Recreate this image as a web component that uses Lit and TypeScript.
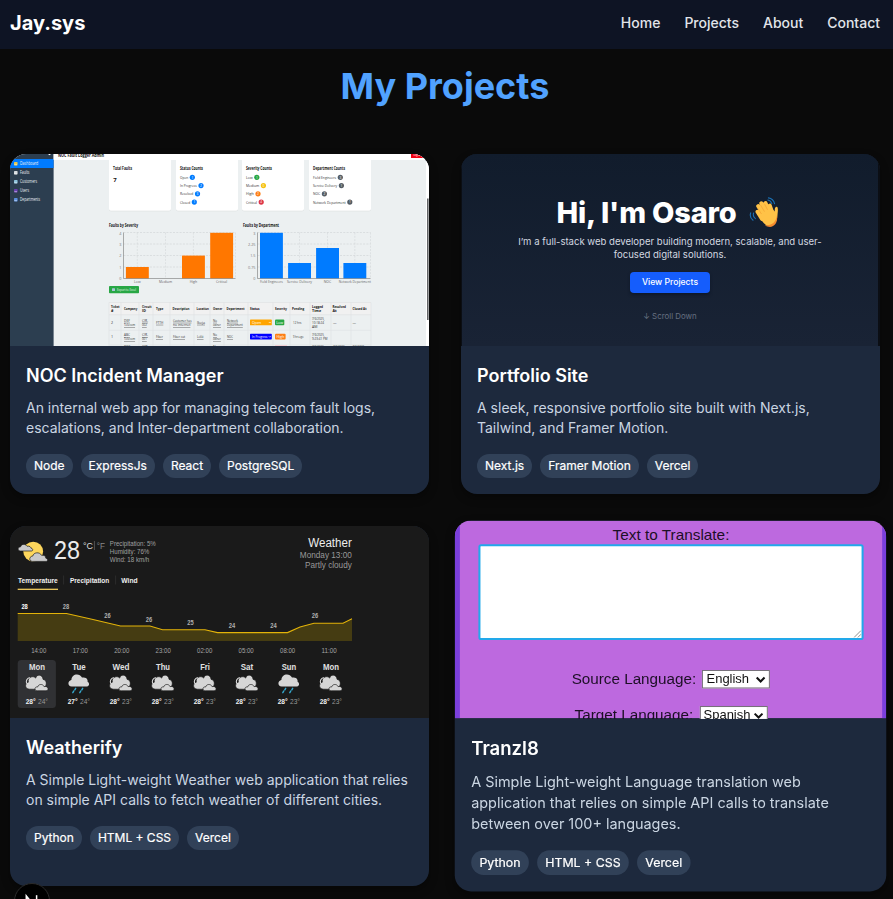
import { LitElement, html, svg, css } from "lit";
import { customElement } from "lit/decorators.js";

type TextOpts = { size?: number; fill?: string; bold?: boolean; anchor?: string; width?: number; underline?: boolean };

/* Small SVG label centred vertically on y; a width stretches or squeezes it to fit. */
const put = (x: number, y: number, text: string, o: TextOpts = {}) => {
  const size = o.size ?? 4.4;
  const fill = o.fill ?? "#333";
  const weight = o.bold ? 700 : 400;
  const anchor = o.anchor ?? "start";
  const line = o.underline ? "underline" : "none";
  return o.width
    ? svg`<text x=${x} y=${y + size * 0.36} font-size=${size} fill=${fill} font-weight=${weight} text-anchor=${anchor} text-decoration=${line} textLength=${o.width} lengthAdjust="spacingAndGlyphs">${text}</text>`
    : svg`<text x=${x} y=${y + size * 0.36} font-size=${size} fill=${fill} font-weight=${weight} text-anchor=${anchor} text-decoration=${line}>${text}</text>`;
};

@customElement("noc-preview")
class NocPreview extends LitElement {
  static styles = css`
    :host { display: block; height: 192px; }
    svg { display: block; width: 100%; height: 100%; font-family: "Open Sans", "Noto Sans", sans-serif; }
  `;

  private nav = [
    ["Dashboard", 163.7, 18.3, "#e8c84c"], ["Faults", 172.8, 9.5, "#d8dde2"], ["Customers", 181.8, 17, "#8fc4dd"],
    ["Users", 190.7, 9, "#6a3fb0"], ["Departments", 199.7, 20, "#5b8fe0"],
  ] as [string, number, number, string][];

  private counts = [
    { x: 176, title: "Status Counts", w: 23, rows: [["Open", 192.3, "#007bff", "1"], ["In Progress", 201, "#007bff", "2"], ["Resolved", 197.5, "#007bff", "3"], ["Closed", 194.3, "#007bff", "1"]] },
    { x: 242, title: "Severity Counts", w: 26, rows: [["Low", 256.8, "#28a745", "1"], ["Medium", 263.4, "#f5c211", "0"], ["High", 258, "#fd7e14", "2"], ["Critical", 261.2, "#dc3545", "4"]] },
    { x: 309, title: "Department Counts", w: 32, rows: [["Field Engineers", 340.3, "#555d65", "3"], ["Service Delivery", 341.4, "#555d65", "1"], ["NOC", 324.4, "#555d65", "2"], ["Network Department", 349.8, "#555d65", "1"]] },
  ] as { x: number; title: string; w: number; rows: [string, number, string, string][] }[];

  private chart(x0: number, x1: number, ticks: string[], bars: [string, number, number, number][], color: string) {
    return svg`
      ${[232.5, 244, 255.5, 267].map((y) => svg`<line x1=${x0} x2=${x1} y1=${y} y2=${y} stroke="#c9cdce" stroke-width=".5" stroke-dasharray="2 1.3"/>`)}
      ${[...bars.map((b) => b[1]), x1].map((x) => svg`<line x1=${x} x2=${x} y1="232.5" y2="278.5" stroke="#cfd3d4" stroke-width=".5" stroke-dasharray="2 1.3"/>`)}
      ${bars.map(([, x, top]) => (top ? svg`<rect x=${x - 11.4} y=${top} width="22.9" height=${278.5 - top} fill=${color}/>` : ""))}
      <path d="M${x0} 232.5V278.5H${x1}" fill="none" stroke="#777" stroke-width=".6"/>
      ${ticks.map((t, i) => put(x0 - 2, 233.2 + i * 11.4, t, { size: 3.8, fill: "#777", anchor: "end" }))}
      ${bars.map(([t, x, , w]) => put(x, 281.6, t, { size: 4.1, fill: "#666", anchor: "middle", width: w }))}
    `;
  }

  render() {
    const cols = [109, 121, 139, 153, 170, 194, 210, 224, 248, 273, 290, 310, 331, 351, 371];
    const heads: [number, string, number, string?][] = [
      [111, "Ticket", 8.5, "#"], [124, "Company", 13.3], [142, "Circuit", 9.5, "ID"], [156, "Type", 7.3], [172.5, "Description", 17], [196.5, "Location", 12.5],
      [213, "Owner", 9.3], [226.5, "Department", 18], [250, "Status", 9.5], [275, "Severity", 12], [292, "Pending", 12.3], [312, "Logged", 11, "Time"], [332.5, "Resolved", 13.3, "At"], [352.5, "Closed At", 14],
    ];
    const rows: [number, string, [number, string, number, string?][]][] = [
      [322.5, "2", [[124, "DEF", 6, "Telecom"], [142, "CIR-", 6, "002"], [156, "FTTH", 7.3], [173, "Customer has", 18.5, "no internet"], [197, "Ikeja", 8], [213, "No", 4, "owner"], [227, "Network", 11, "Department"]]],
      [336.8, "1", [[124, "ABC", 6, "Telecom"], [142, "CIR-", 6, "001"], [156, "Fiber", 7], [173, "Fiber cut", 12], [197, "Lekki", 6.5], [213, "No", 4, "owner"], [227, "NOC", 6]]],
    ];
    return html`<svg viewBox="10 154 419 192">
      <rect x="10" y="154" width="419" height="192" fill="#ecf0f1"/>
      <rect x="10" y="154" width="43.6" height="192" fill="#2c3e50"/>
      <rect x="10" y="159" width="43.6" height="9" fill="#007bff"/>
      <path d="M48 154l1.5 1.2L51 154z" fill="#fff"/>
      ${this.nav.map(([t, y, w, c]) => svg`
        <rect x="14" y=${y - 1.7} width="3.6" height="3.4" rx=".7" fill=${c}/>
        <path d="M14.4 ${y + 1}h2.6" stroke="#fff" stroke-width=".5"/>
        ${put(20, y, t, { size: 4.5, fill: "#eef2f5", width: w })}`)}
      <rect x="53.6" y="154" width="376" height="6" fill="#fff"/>
      ${put(58, 155, "NOC Fault Logger Admin", { size: 5.4, fill: "#111", bold: true, width: 46 })}
      <rect x="411" y="154" width="13" height="4" fill="#f00012"/>
      ${put(413.5, 154.4, "Logout", { size: 3.6, fill: "#fff", width: 8 })}
      <rect x="426" y="154" width="3" height="192" fill="#fff"/>
      <rect x="427" y="198.5" width="1.6" height="121.5" fill="#626466"/>

      ${[109, 176, 242, 309].map((x) => svg`<path d="M${x} 160h62v49.5q0 1.7-1.7 1.7h-58.6q-1.7 0-1.7-1.7z" fill="#d5dadb"/>
        <path d="M${x} 159h62v50q0 1.7-1.7 1.7h-58.6q-1.7 0-1.7-1.7z" fill="#fff"/>`)}
      ${put(113, 168, "Total Faults", { size: 4.3, fill: "#111", bold: true, width: 19 })}
      ${put(113.2, 179.5, "7", { size: 6, fill: "#111", bold: true })}
      ${this.counts.map((c) => svg`
        ${put(c.x + 4, 168, c.title, { size: 4.3, fill: "#111", bold: true, width: c.w })}
        ${c.rows.map(([t, cx, color, n], i) => svg`
          ${put(c.x + 4, 177.4 + i * 8.25, t, { size: 4.3, width: cx - c.x - 8.2 })}
          <circle cx=${cx} cy=${177.3 + i * 8.25} r="2.6" fill=${color}/>
          ${put(cx, 177.4 + i * 8.25, n, { size: 3.2, fill: "#fff", anchor: "middle" })}`)}`)}

      ${put(109, 225, "Faults by Severity", { size: 4.4, fill: "#111", bold: true, width: 29 })}
      ${put(243, 225, "Faults by Department", { size: 4.4, fill: "#111", bold: true, width: 36 })}
      ${this.chart(123.5, 235.5, ["4", "3", "2", "1", "0"], [["Low", 137.3, 267, 6.5], ["Medium", 165.5, 0, 13], ["High", 193.4, 255.6, 7.5], ["Critical", 221.6, 232.8, 11]], "#ff7700")}
      ${this.chart(257.5, 370.5, ["3", "2.25", "1.5", "0.75", "0"], [["Field Engineers", 271.4, 232.8, 23], ["Service Delivery", 299.5, 263, 25], ["NOC", 327.5, 248, 7.5], ["Network Department", 354.8, 263, 32]], "#007bff")}

      <rect x="109" y="286" width="30" height="7.3" rx=".8" fill="#28a745"/>
      <rect x="112" y="288.3" width="3" height="2.8" rx=".5" fill="#a9c4d8"/>
      ${put(117, 289.8, "Export to Excel", { size: 4, fill: "#e9f8ec", width: 19 })}

      <rect x="109" y="302.5" width="262" height="12.2" fill="#f1f1f1"/>
      ${[302.5, 314.7, 330.3, 345].map((y) => svg`<line x1="109" x2="371" y1=${y} y2=${y} stroke="#dde1e2" stroke-width=".6"/>`)}
      ${cols.map((x) => svg`<line x1=${x} x2=${x} y1="302.5" y2="346" stroke="#dde1e2" stroke-width=".6"/>`)}
      ${heads.map(([x, a, w, b]) => b
        ? svg`${put(x, 306.5, a, { size: 3.7, fill: "#111", bold: true, width: w })}${put(x, 310.7, b, { size: 3.7, fill: "#111", bold: true })}`
        : put(x, 308.6, a, { size: 3.7, fill: "#111", bold: true, width: w }))}
      ${rows.map(([y, id, cells]) => svg`
        ${put(111, y, id, { size: 3.6 })}
        ${cells.map(([x, a, w, b]) => b
          ? svg`${put(x, y - 2, a, { size: 3.7, underline: true, width: w })}${put(x, y + 2.3, b, { size: 3.7, underline: true, width: b.length * 1.58 })}`
          : put(x, y, a, { size: 3.7, underline: true, width: w }))}`)}
      <rect x="250" y="319.6" width="21.8" height="5.7" rx=".6" fill="#ffa500"/>
      ${put(252, 322.5, "Open", { size: 3.6, fill: "#fff" })}
      <rect x="250" y="333.8" width="21.8" height="5.6" rx=".6" fill="#0000ff"/>
      ${put(252, 336.7, "In Progress", { size: 3.6, fill: "#fff", width: 15.5 })}
      <path d="M268.8 322l1 1 1-1M268.8 336.2l1 1 1-1" stroke="#fff" fill="none" stroke-width=".6"/>
      <rect x="275" y="319.6" width="9.3" height="5.7" rx="1" fill="#28a745"/>
      ${put(279.6, 322.5, "Low", { size: 3.6, fill: "#fff", anchor: "middle" })}
      <rect x="275" y="333.8" width="10.6" height="5.8" rx="1" fill="#fd7e14"/>
      ${put(280.3, 336.7, "High", { size: 3.6, fill: "#fff", anchor: "middle" })}
      ${put(293, 322.5, "12 hrs", { size: 3.6, width: 8.5 })}${put(293, 336.7, "9 hrs ago", { size: 3.5, width: 10.5 })}
      ${put(312, 318.5, "7/6/2025,", { size: 3.5, width: 12.5 })}${put(312, 322.7, "10:18:24", { size: 3.5, width: 12 })}${put(312, 327, "AM", { size: 3.5 })}
      ${put(312, 334.7, "7/6/2025,", { size: 3.5, width: 12.5 })}${put(312, 339, "9:23:41 PM", { size: 3.5, width: 15.5 })}
      ${put(333, 322.5, "—", { size: 3.6 })}${put(352.5, 322.5, "—", { size: 3.6 })}
      ${put(124, 346.3, "DEF", { size: 3.6 })}${put(142, 346.3, "CIR-", { size: 3.6 })}${put(213, 346.3, "No", { size: 3.6 })}
      <rect x="275" y="345.2" width="12" height="1" fill="#f6c9cd"/>
      ${[312, 333, 352.5].map((x) => put(x, 346.3, "7/6/2025,", { size: 3.5, width: 12.5 }))}
    </svg>`;
  }
}

@customElement("portfolio-preview")
class PortfolioPreview extends LitElement {
  static styles = css`
    :host { display: block; height: 192px; padding: 0 2px 0 1px; background: #0b0e14; box-sizing: border-box; }
    .hero { height: 192px; box-sizing: border-box; padding-top: 40px; display: flex; flex-direction: column; align-items: center; background: linear-gradient(#111c2c, #192335); }
    .title { display: flex; align-items: center; gap: 11px; margin-right: 5px; height: 37px; color: #fff; font-weight: 800; font-size: 29px; line-height: 37px; letter-spacing: -0.18px; white-space: nowrap; }
    .hand { width: 31px; height: 31px; display: block; }
    .lead { margin-top: 3.5px; text-align: center; font-size: 9.55px; line-height: 13.3px; color: #d3d8e0; white-space: nowrap; }
    .button { margin-top: 11px; width: 80px; height: 21px; border-radius: 4px; background: #155dfc; color: #fff; font-size: 8.6px; font-weight: 500; line-height: 21px; text-align: center; box-shadow: 0 2px 3px #0f1828; }
    .scroll { margin-top: 17px; font-size: 7.9px; line-height: 12px; color: #667080; }
  `;
  render() {
    return html`<div class="hero">
      <div class="title"><span>Hi, I'm Osaro</span>
        <svg class="hand" viewBox="0 0 31 31">
          <g stroke="#ffc247" stroke-width="4" stroke-linecap="round">
            <path d="M17 19L10.2 9.2M19 17L13.3 6.3M21.5 15L17.5 6M24 15L21.8 8.6M14 22L9.5 14.8"/>
          </g>
          <path d="M10.5 18L13.5 12.5 25 12.8 26.6 14.4C27 12.6 26.4 10.4 28.3 9.8 30.3 9.4 30 13.2 29.6 16.8 29.4 23 27.4 28.6 22 29 17.2 29.3 13.2 23.6 10.5 18Z" fill="#ffc247"/>
          <path d="M17 28C23 29 28 26 29 18 30.2 26 26 30.6 20.6 29.8 19 29.5 18 29 17 28Z" fill="#f58b2e"/>
          <path d="M13.5 17L9.8 11.5M16.5 14.6L12.5 8M19.6 12.8L16.4 6.8" stroke="#f2a234" stroke-width=".7" fill="none"/>
          <g stroke="#1a70b4" stroke-width="1.1" fill="none" stroke-linecap="round">
            <path d="M19.8 3Q22.8 3.4 23.8 6.6M20.4.9Q25.4 1.6 26.6 6.8M5.6 16Q4.5 19.6 7.4 21.6M2.7 15.8Q1.2 20.4 5 23.2"/>
          </g>
        </svg>
      </div>
      <div class="lead">I’m a full-stack web developer building modern, scalable, and user-<br />focused digital solutions.</div>
      <div class="button">View Projects</div>
      <div class="scroll">↓ Scroll Down</div>
    </div>`;
  }
}

@customElement("weather-preview")
class WeatherPreview extends LitElement {
  static styles = css`
    :host { display: block; height: 192px; }
    svg { display: block; width: 100%; height: 100%; font-family: "Liberation Sans", Arial, sans-serif; }
  `;
  private cloud(x: number, y: number) {
    return svg`<g transform="translate(${x} ${y})" fill="#d6d6d6" stroke="#1c1c1c" stroke-width=".7">
      <path d="M-7.3 6.4C-12.8 6-11.6-.2-8.4-.6-9.4-6.6-2.6-7.2-1-4.7-.2-9 6-8.6 6.4-3.4 10 -3 10.6 2 8 4.5L4 6.6Z" transform="translate(-.3 -.6)"/>
      <path d="M-10.4.2Q-11.6-4.4-7.2-5.8" fill="none" stroke="#d6d6d6" stroke-width="1.1"/>
      <path d="M.2 7.4C-3.4 7-2.2 2.8.6 3.6 1.4.4 6 .2 7 3.2 11.4 2 12.6 7 9 7.4Z"/>
    </g>`;
  }
  private rain(x: number, y: number) {
    return svg`<g transform="translate(${x} ${y})">
      <path d="M-7.3 3.2C-11.8 3-11.4-3-7.6-3.4-7.6-9.4.4-11 3-5.8 8 -7 9.2-2.8 8.4-2 11.4.2 10 3 7.4 3.2Z" fill="#d6d6d6"/>
      <path d="M-3.3 4.9l-.9 1.6M-5.3 7.7l-.9 1.6M3.7 4.9l-.9 1.6M1.7 7.7l-.9 1.6" stroke="#35a9cf" stroke-width="1.4" stroke-linecap="round"/>
    </g>`;
  }
  render() {
    const points = "17.7,613.5 66.5,613.5 93,619.5 120.5,626 150,626 162.5,629.7 205,629.7 217.5,632.6 287.5,632.6 300,627 314,623.2 343,623.2 352,618.8";
    const values: [number, number, string][] = [[24.6, 606.4, "28"], [66, 606.4, "28"], [107.5, 616, "26"], [149, 619.4, "26"], [190.5, 622.3, "25"], [232, 625.5, "24"], [273.5, 625.5, "24"], [315, 616, "26"]];
    const times = ["14:00", "17:00", "20:00", "23:00", "02:00", "05:00", "08:00", "11:00"];
    const days: [string, string, string, boolean][] = [["Mon", "28°", "24°", false], ["Tue", "27°", "24°", true], ["Wed", "28°", "23°", false], ["Thu", "28°", "23°", false], ["Fri", "28°", "23°", false], ["Sat", "28°", "23°", false], ["Sun", "28°", "23°", true], ["Mon", "28°", "23°", false]];
    return html`<svg viewBox="10 526 419 192">
      <rect x="10" y="526" width="419" height="192" fill="#1a1a1a"/>
      <circle cx="33.2" cy="551.6" r="9.9" fill="#fdd65c"/>
      <path d="M20.6 551C17 551 17.6 546.8 20.6 546.8 20.8 544 25.4 543.4 27 546.2 30 545.6 31 547.6 30.8 548 33.4 548.4 33 551 31.6 551Z" fill="#c9c9cb" stroke="#1a1a1a" stroke-width=".7"/>
      <path d="M32.4 561.4C28.6 561.4 29 556.2 32.8 556 33.4 552.4 39.6 551.4 41.6 555.4 45 554.8 46 557 45.6 558 48.6 559 47.8 561.4 46.2 561.4Z" fill="#c9c9cb" stroke="#1a1a1a" stroke-width=".7"/>
      ${put(54, 550.3, "28", { size: 25, fill: "#ececec", width: 26 })}
      ${put(83, 545.6, "°C", { size: 9, fill: "#ddd", width: 10 })}
      <path d="M94.4 541v9" stroke="#777" stroke-width=".6"/>
      ${put(96.8, 545.6, "°F", { size: 8.6, fill: "#888", width: 8.2 })}
      ${put(109.8, 543.3, "Precipitation: 5%", { size: 6.6, fill: "#a0a0a0", width: 46 })}
      ${put(109.8, 551.6, "Humidity: 76%", { size: 6.6, fill: "#a0a0a0", width: 39.5 })}
      ${put(109.8, 559.8, "Wind: 18 km/h", { size: 6.6, fill: "#a0a0a0", width: 39.5 })}
      ${put(351.8, 542.7, "Weather", { size: 12, fill: "#eee", anchor: "end", width: 43.5 })}
      ${put(351.8, 554.7, "Monday 13:00", { size: 9, fill: "#999", anchor: "end", width: 52 })}
      ${put(351.8, 565, "Partly cloudy", { size: 9, fill: "#999", anchor: "end", width: 46.8 })}
      ${put(18, 580.6, "Temperature", { size: 7.2, fill: "#f0f0f0", bold: true, width: 39.8 })}
      ${put(70, 580.6, "Precipitation", { size: 7.2, fill: "#f0f0f0", bold: true, width: 39.3 })}
      ${put(121.3, 580.6, "Wind", { size: 7.2, fill: "#f0f0f0", bold: true, width: 16.3 })}
      <rect x="17.7" y="588.7" width="40.3" height="1.2" fill="#fdd663"/>
      <path d="M63.6 575.5v9M115.6 575.5v9" stroke="#333" stroke-width=".7"/>
      <polygon points="${points} 352,641 17.7,641" fill="#453c12"/>
      <polyline points=${points} fill="none" stroke="#e3b309" stroke-width="1.1"/>
      ${values.map(([x, y, t], i) => put(x, y, t, { size: 6.4, fill: i ? "#b0b0b0" : "#fff", bold: true, anchor: "middle", width: 6.4 }))}
      ${times.map((t, i) => put(38.8 + i * 41.47, 650.7, t, { size: 6.7, fill: "#a5a5a5", anchor: "middle", width: 15.2 }))}
      <rect x="17.7" y="660" width="38.2" height="48" rx="3.5" fill="#303134"/>
      ${days.map(([d, hi, lo, wet], i) => {
        const x = 37 + i * 42;
        return svg`${put(x, 667, d, { size: 8.4, fill: "#e0e0e0", bold: true, anchor: "middle", width: { Mon: 16, Tue: 13.5, Wed: 17, Thu: 14, Fri: 9.7, Sat: 12.5, Sun: 14.5 }[d] })}
          ${wet ? this.rain(x, 683.4) : this.cloud(x, 683.4)}
          ${put(x - 11.3, 701.6, hi, { size: 6.7, fill: "#f2f2f2", bold: true, width: 10 })}
          ${put(x + 1, 701.6, lo, { size: 6.7, fill: "#999", width: 10 })}`;
      })}
    </svg>`;
  }
}

@customElement("translate-preview")
class TranslatePreview extends LitElement {
  static styles = css`
    :host { display: block; height: 192px; overflow: hidden; font-family: "Liberation Sans", Arial, sans-serif; color: #1d0f26; }
    .panel { height: 192px; box-sizing: border-box; border: solid #7b3fdc; border-width: 0 4px 0 5px; background: #bd69df; padding-top: 5px; }
    .heading { text-align: center; font-size: 14.9px; line-height: 18px; }
    .area { box-sizing: border-box; margin: 0 18.5px 0 18px; height: 92.5px; border: 2px solid #22a9ea; border-radius: 2.5px; background: #fff; display: flex; align-items: flex-end; justify-content: flex-end; }
    .area svg { width: 8px; height: 8px; }
    .row { display: flex; justify-content: center; align-items: center; gap: 6px; height: 18px; font-size: 14.8px; line-height: 18px; white-space: nowrap; }
    .first { margin-top: 29.5px; }
    .second { margin-top: 17px; }
    .select { display: flex; align-items: center; justify-content: space-between; box-sizing: border-box; width: 66px; height: 18px; padding: 0 3px; border: 1px solid #76707a; background: #fff; color: #111; font-size: 12.6px; }
    .select svg { width: 10px; height: 7px; }
  `;
  private select(text: string) {
    return html`<span class="select"><span>${text}</span><svg viewBox="0 0 10 7"><path d="M1.2 1.4L5 5.2 8.8 1.4" fill="none" stroke="#111" stroke-width="2" /></svg></span>`;
  }
  render() {
    return html`<div class="panel">
      <div class="heading">Text to Translate:</div>
      <div class="area"><svg viewBox="0 0 8 8"><path d="M.8 7.4L7.4.8M4.4 7.4L7.4 4.4" stroke="#777" stroke-width=".8" /></svg></div>
      <div class="row first"><span>Source Language:</span>${this.select("English")}</div>
      <div class="row second"><span>Target Language:</span>${this.select("Spanish")}</div>
    </div>`;
  }
}

@customElement("project-card")
class ProjectCard extends LitElement {
  static properties = { name: { type: String }, text: { type: String }, tags: { type: Array } };
  declare name: string;
  declare text: string;
  declare tags: string[];
  static styles = css`
    :host { display: flex; flex-direction: column; overflow: hidden; border-radius: 16px; background: #1d293d; box-shadow: 0 4px 8px rgba(0, 0, 0, 0.35); }
    .media { height: 192px; overflow: hidden; }
    .body { padding: 16px; }
    h2 { margin: 0; color: #fff; font-size: 18px; font-weight: 600; line-height: 28px; }
    p { margin: 8px 0 16px; color: #cad5e2; font-size: 14px; line-height: 20px; }
    .tags { display: flex; flex-wrap: wrap; gap: 8px; }
    .tag { padding: 4px 8px; border-radius: 12px; background: #314158; color: #fff; font-size: 12px; font-weight: 400; line-height: 16px; -webkit-text-stroke: 0.2px #fff; }
  `;
  render() {
    return html`<div class="media"><slot></slot></div>
      <div class="body">
        <h2>${this.name}</h2>
        <p>${this.text}</p>
        <div class="tags">${this.tags.map((t) => html`<span class="tag">${t}</span>`)}</div>
      </div>`;
  }
}

@customElement("app-root")
class AppRoot extends LitElement {
  static styles = css`
    :host { display: block; position: relative; height: 899px; overflow: hidden; background: #0a0a0a; font-family: Inter, sans-serif; color: #fff; }
    header { display: flex; align-items: center; justify-content: space-between; height: 49px; box-sizing: border-box; padding: 0 13px 3px 10px; background: #0e1424; }
    .logo { font-size: 20px; font-weight: 700; line-height: 28px; }
    nav { display: flex; gap: 24px; font-size: 14px; font-weight: 500; line-height: 20px; color: #e2e4ea; }
    main { padding: 17px 13px 0 10px; }
    h1 { margin: 0; text-align: center; color: #51a2ff; font-size: 36px; font-weight: 700; line-height: 40px; }
    .grid { margin-top: 48px; display: grid; grid-template-columns: 1fr 1fr; gap: 32px; }
    .raised { transform: scale(1.03); }
    .badge { position: absolute; left: 14px; top: 883px; width: 36px; height: 36px; box-sizing: border-box; border-radius: 50%; border: 1.5px solid #2b2b2b; background: #000; }
    .badge svg { display: block; width: 33px; height: 33px; }
  `;
  render() {
    return html`
      <header>
        <div class="logo">Jay.sys</div>
        <nav><span>Home</span><span>Projects</span><span>About</span><span>Contact</span></nav>
      </header>
      <main>
        <h1>My Projects</h1>
        <div class="grid">
          <project-card .name=${"NOC Incident Manager"} .text=${"An internal web app for managing telecom fault logs, escalations, and Inter-department collaboration."} .tags=${["Node", "ExpressJs", "React", "PostgreSQL"]}><noc-preview></noc-preview></project-card>
          <project-card .name=${"Portfolio Site"} .text=${"A sleek, responsive portfolio site built with Next.js, Tailwind, and Framer Motion."} .tags=${["Next.js", "Framer Motion", "Vercel"]}><portfolio-preview></portfolio-preview></project-card>
          <project-card .name=${"Weatherify"} .text=${"A Simple Light-weight Weather web application that relies on simple API calls to fetch weather of different cities."} .tags=${["Python", "HTML + CSS", "Vercel"]}><weather-preview></weather-preview></project-card>
          <project-card class="raised" .name=${"Tranzl8"} .text=${"A Simple Light-weight Language translation web application that relies on simple API calls to translate between over 100+ languages."} .tags=${["Python", "HTML + CSS", "Vercel"]}><translate-preview></translate-preview></project-card>
        </div>
      </main>
      <div class="badge"><svg viewBox="0 0 33 33"><path d="M11.4 22.5V12.2L22.5 26" fill="none" stroke="#fff" stroke-width="1.7" /><path d="M21.6 11.2v9" stroke="#fff" stroke-width="1.5" /></svg></div>
    `;
  }
}
